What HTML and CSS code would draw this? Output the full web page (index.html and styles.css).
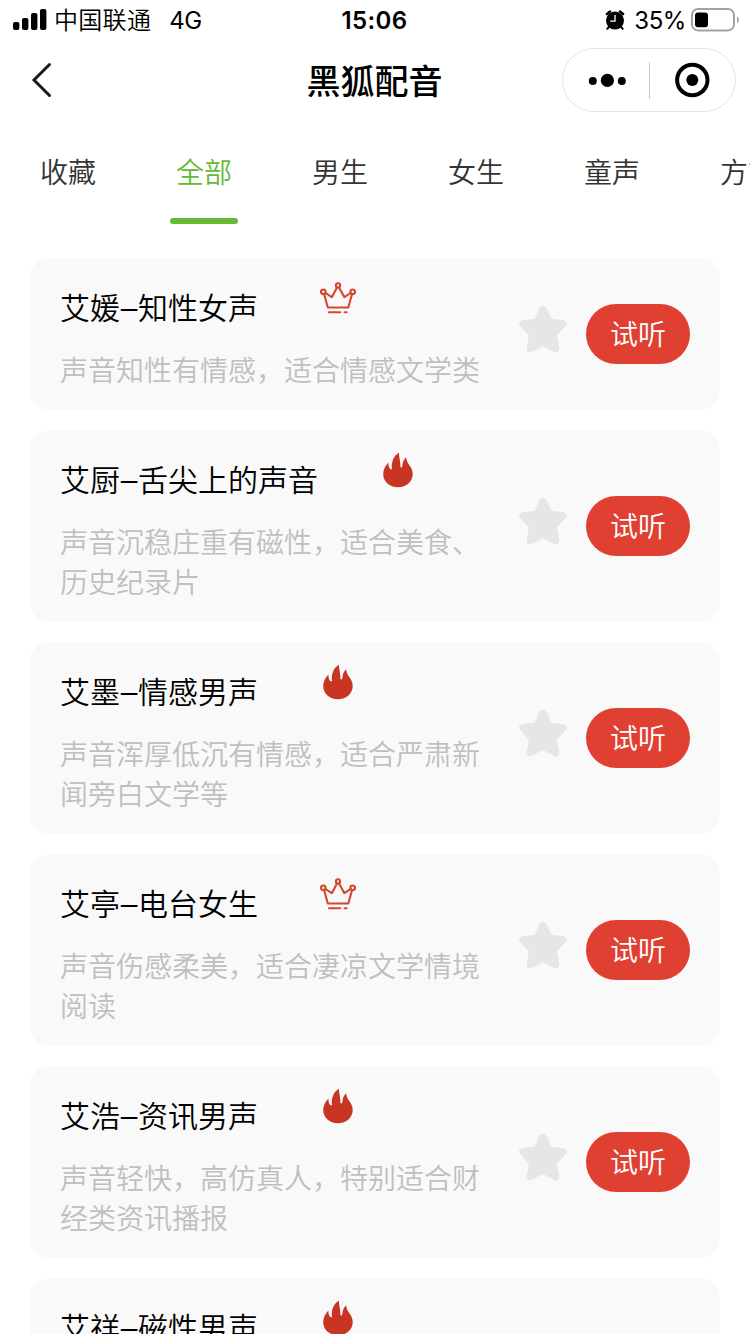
FILE: index.html
```html
<!DOCTYPE html>
<html lang="zh-CN">

<head>
  <meta charset="UTF-8">
  <meta name="viewport" content="width=device-width, initial-scale=1.0">
  <title>黑狐配音</title>
  <link rel="stylesheet" href="styles.css">
</head>

<body>

  <!-- 公用图标 -->
  <svg class="symbols">
    <symbol id="crown" viewBox="0 0 36 36">
      <g fill="none" stroke="#d6452f" stroke-width="2.1" stroke-linejoin="round" stroke-linecap="round">
        <circle cx="18" cy="5.4" r="2.1" />
        <circle cx="3.3" cy="11.8" r="2.3" />
        <circle cx="32.7" cy="11.8" r="2.3" />
        <path d="M4.2 14.2L7.8 27.5H28.3L32 14.2M5.5 13L11.8 17.2L17 7.6M19 7.6L24.4 17.2L30.6 13" />
        <path d="M9 32.3H20.3M24.6 32.3H26.6" />
      </g>
    </symbol>
    <symbol id="fire" viewBox="0 0 36 36">
      <path fill="#c83522" d="M19 .7C18.8 5 20.4 8 20.5 15.2L22 15.6C22.8 12 22.6 8.2 26.2 5.2C26.2 12 32.7 14 32.7 22C32.7 29.6 26.4 35.3 18 35.3C9.5 35.3 3.2 29.6 3.2 22C3.2 17 5.4 13.6 8.4 10.4C8.4 13.6 8.9 15.8 10.4 17.2H12C11.2 9.8 13.6 3.6 19 .7Z" />
    </symbol>
    <symbol id="star" viewBox="0 0 48 48">
      <path fill="#e6e6e6" d="M20.4 2.8Q23.9 -1.2 27.4 2.8L32.4 13.7L44.2 15.3Q50 16.4 47 20.6L38 30.4L40.4 43.6Q40 48.4 35.4 46.9L24 41L12.4 46.9Q7.8 48.4 7.6 43.6L9.8 30.4L1 20.6Q-2 16.4 3.8 15.3L15.6 13.7Z" />
    </symbol>
  </svg>

  <!-- 状态栏 -->
  <div class="status-bar">
    <div class="status-left">
      <svg class="signal" width="34" height="22" viewBox="0 0 34 22">
        <rect x="0" y="13" width="6.4" height="8" rx="2" />
        <rect x="9" y="9" width="6.4" height="12" rx="2" />
        <rect x="18" y="4" width="6.4" height="17" rx="2" />
        <rect x="27" y="0" width="6.4" height="21" rx="2" />
      </svg>
      <span class="carrier">中国联通</span>
      <span class="network">4G</span>
    </div>
    <div class="status-time">15:06</div>
    <div class="status-right">
      <svg class="alarm" width="20" height="20" viewBox="0 0 20 20">
        <circle cx="10" cy="10.6" r="9" />
        <path d="M2 4L5 1.6M18 4L15 1.6" stroke="#000" stroke-width="2.6" stroke-linecap="round" />
        <path d="M4.2 16.5L2.3 18.8M15.8 16.5L17.7 18.8" stroke="#000" stroke-width="2" stroke-linecap="round" />
        <path d="M10 5V11.2H5.2" fill="none" stroke="#fff" stroke-width="1.3" />
      </svg>
      <span class="percent">35%</span>
      <svg class="battery" width="49" height="24" viewBox="0 0 49 24">
        <rect x="1" y="1" width="42" height="21.4" rx="6" fill="none" stroke="#a3a3a3" stroke-width="2" />
        <rect x="4" y="4.4" width="13" height="14.8" rx="3" />
        <path d="M46 8.2C48.6 9.8 48.6 13.6 46 15.2Z" fill="#a3a3a3" />
      </svg>
    </div>
  </div>

  <!-- 导航栏 -->
  <div class="nav-bar">
    <svg class="back" width="22" height="36" viewBox="0 0 22 36">
      <path d="M18.5 2.5L3 18L18.5 33.5" fill="none" stroke="#1a1a1a" stroke-width="3" stroke-linecap="round" />
    </svg>
    <h1 class="nav-title">黑狐配音</h1>
    <div class="capsule">
      <svg class="more" width="38" height="14" viewBox="0 0 38 14">
        <circle cx="4.8" cy="8" r="4" />
        <circle cx="19.4" cy="7.4" r="6.6" />
        <circle cx="33.8" cy="8" r="4" />
      </svg>
      <span class="line"></span>
      <svg class="close" width="36" height="36" viewBox="0 0 36 36">
        <circle cx="18.3" cy="18" r="15.2" fill="none" stroke="#000" stroke-width="4" />
        <circle cx="18.3" cy="18" r="6" />
      </svg>
    </div>
  </div>

  <!-- 分类 -->
  <ul class="tabs">
    <li class="tab">收藏</li>
    <li class="tab active">全部</li>
    <li class="tab">男生</li>
    <li class="tab">女生</li>
    <li class="tab">童声</li>
    <li class="tab">方言</li>
  </ul>

  <!-- 配音列表 -->
  <div class="voice-list">
    <div class="voice-item">
      <div class="voice-info">
        <div class="voice-name">艾媛<i>–</i>知性女声<svg class="tag"><use href="#crown" /></svg></div>
        <p class="voice-desc">声音知性有情感，适合情感文学类</p>
      </div>
      <svg class="star"><use href="#star" /></svg>
      <button class="play-btn">试听</button>
    </div>

    <div class="voice-item">
      <div class="voice-info">
        <div class="voice-name">艾厨<i>–</i>舌尖上的声音<svg class="tag"><use href="#fire" /></svg></div>
        <p class="voice-desc">声音沉稳庄重有磁性，适合美食、历史纪录片</p>
      </div>
      <svg class="star"><use href="#star" /></svg>
      <button class="play-btn">试听</button>
    </div>

    <div class="voice-item">
      <div class="voice-info">
        <div class="voice-name">艾墨<i>–</i>情感男声<svg class="tag"><use href="#fire" /></svg></div>
        <p class="voice-desc">声音浑厚低沉有情感，适合严肃新闻旁白文学等</p>
      </div>
      <svg class="star"><use href="#star" /></svg>
      <button class="play-btn">试听</button>
    </div>

    <div class="voice-item">
      <div class="voice-info">
        <div class="voice-name">艾亭<i>–</i>电台女生<svg class="tag"><use href="#crown" /></svg></div>
        <p class="voice-desc">声音伤感柔美，适合凄凉文学情境阅读</p>
      </div>
      <svg class="star"><use href="#star" /></svg>
      <button class="play-btn">试听</button>
    </div>

    <div class="voice-item">
      <div class="voice-info">
        <div class="voice-name">艾浩<i>–</i>资讯男声<svg class="tag"><use href="#fire" /></svg></div>
        <p class="voice-desc">声音轻快，高仿真人，特别适合财经类资讯播报</p>
      </div>
      <svg class="star"><use href="#star" /></svg>
      <button class="play-btn">试听</button>
    </div>

    <div class="voice-item">
      <div class="voice-info">
        <div class="voice-name">艾祥<i>–</i>磁性男声<svg class="tag"><use href="#fire" /></svg></div>
      </div>
    </div>
  </div>

</body>

</html>
```
FILE: styles.css
```css
* {
  margin: 0;
  padding: 0;
  box-sizing: border-box;
}

body {
  width: 750px;
  height: 1334px;
  overflow: hidden;
  display: flex;
  flex-direction: column;
  background-color: #fff;
  color: #000;
  font-family: Inter, "Noto Sans CJK SC", sans-serif;
}

svg {
  display: block;
  flex-shrink: 0;
}

.symbols {
  display: none;
}

/* 状态栏 */
.status-bar {
  display: grid;
  grid-template-columns: 1fr auto 1fr;
  align-items: center;
  flex-shrink: 0;
  height: 40px;
  padding: 0 10px 0 13px;
  font-size: 24px;
  line-height: 40px;
}

.status-left,
.status-right {
  display: flex;
  align-items: center;
}

.status-right {
  justify-content: flex-end;
}

.carrier,
.network,
.status-time,
.percent {
  padding-top: 2px;
  line-height: 38px;
}

.carrier {
  margin-left: 7px;
  font-weight: 350;
  letter-spacing: 0.3px;
}

.network {
  margin-left: 18px;
  letter-spacing: -0.4px;
}

.status-time {
  font-weight: 600;
  letter-spacing: 0.4px;
  margin-right: 4px;
}

.percent {
  margin: 0 5px 0 9px;
  letter-spacing: -0.4px;
}

/* 导航栏 */
.nav-bar {
  display: grid;
  grid-template-columns: 1fr auto 1fr;
  align-items: center;
  flex-shrink: 0;
  height: 80px;
  padding: 0 14px 0 31px;
}

.nav-title {
  width: 136px;
  margin-left: -18px;
  padding-top: 3px;
  font-size: 34px;
  font-weight: 500;
  line-height: 77px;
}

.capsule {
  display: flex;
  align-items: center;
  justify-self: end;
  width: 174px;
  height: 64px;
  padding-left: 25px;
  border: 1px solid #e5e5e5;
  border-radius: 32px;
}

.capsule .line {
  width: 1px;
  height: 37px;
  margin: 0 24px 0 23px;
  background-color: #ccc;
}

/* 分类 */
.tabs {
  display: flex;
  flex-shrink: 0;
  height: 104px;
  overflow: hidden;
  list-style: none;
}

.tab {
  display: flex;
  flex-direction: column;
  align-items: center;
  flex-shrink: 0;
  width: 136px;
  padding-top: 2px;
  font-size: 28px;
  font-weight: 350;
  line-height: 102px;
  color: #333;
}

.tab.active {
  color: #67b935;
}

.tab.active::after {
  content: "";
  width: 68px;
  height: 6px;
  margin-top: -6px;
  border-radius: 3px;
  background-color: #67b935;
}

/* 列表 */
.voice-list {
  display: flex;
  flex-direction: column;
  gap: 20px;
  padding: 34px 30px 0;
}

.voice-item {
  display: flex;
  align-items: center;
  flex-shrink: 0;
  padding: 20px 30px;
  border-radius: 20px;
  background-color: #f9f9f9;
}

.voice-info {
  width: 425px;
}

.voice-name {
  display: flex;
  height: 60px;
  margin-bottom: 13px;
  font-size: 30px;
  font-weight: 350;
  line-height: 60px;
}

.voice-name i {
  width: 18px;
  text-align: center;
  font-family: "Liberation Sans", sans-serif;
  font-style: normal;
}

.voice-name .tag {
  width: 36px;
  height: 36px;
  margin: 2px 0 0 62px;
}

.voice-desc {
  margin-bottom: -1px;
  font-size: 28px;
  font-weight: 350;
  line-height: 40px;
  color: #bfbfbf;
}

.star {
  width: 48px;
  height: 48px;
  margin: 0 19px 10px 34px;
}

.play-btn {
  flex-shrink: 0;
  width: 104px;
  height: 60px;
  padding-top: 2px;
  border: none;
  border-radius: 30px;
  background-color: #e04032;
  color: #fff;
  font-family: inherit;
  font-size: 28px;
  font-weight: 350;
  line-height: 58px;
}
```
